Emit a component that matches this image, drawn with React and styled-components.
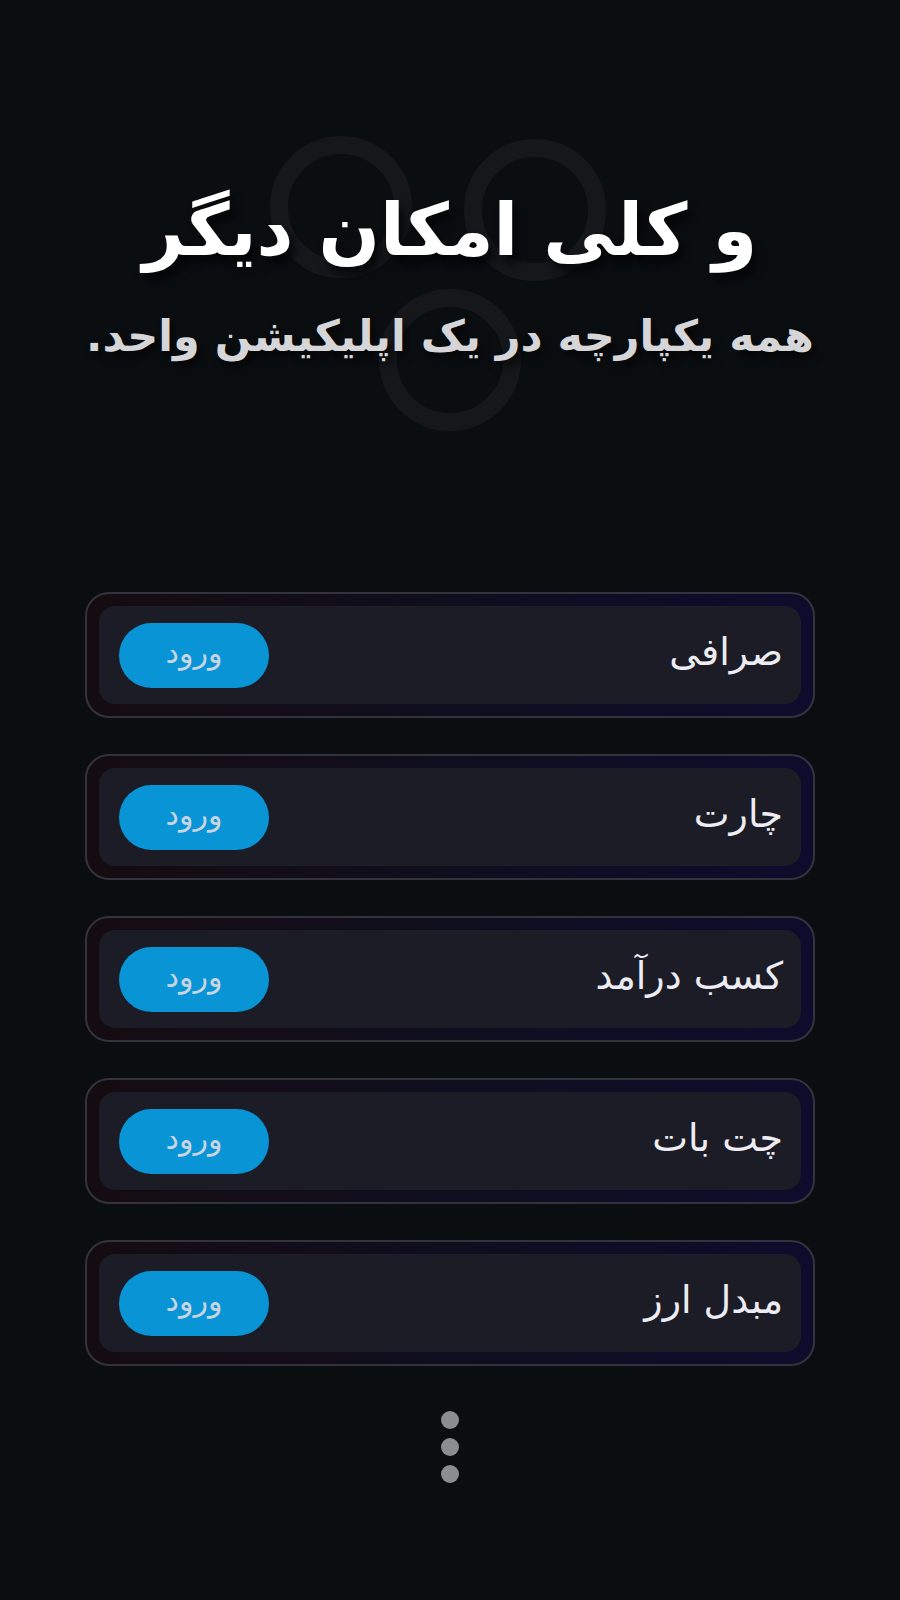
import React from "react"
import styled, { createGlobalStyle } from "styled-components"

const GlobalStyle = createGlobalStyle`
  html, body {
    margin: 0;
    padding: 0;
    background: #0b0e11;
  }
  body {
    font-family: "DejaVu Sans", "Noto Sans", sans-serif;
    color: #fff;
  }
`

const Page = styled.div`
  width: 900px;
  min-height: 1600px;
  background: #0b0e11;
  display: flex;
  flex-direction: column;
  align-items: center;
  direction: rtl;
`

const Hero = styled.header`
  position: relative;
  width: 100%;
  height: 592px;
  display: flex;
  flex-direction: column;
  align-items: center;
  padding-top: 180px;
  box-sizing: border-box;
`

const Rings = styled.svg`
  position: absolute;
  left: 0;
  top: 0;
  pointer-events: none;
`

const Title = styled.h1`
  position: relative;
  margin: 0;
  font-size: 72px;
  font-weight: 700;
  line-height: 100px;
  color: #ffffff;
  text-shadow: 5px 8px 10px rgba(0, 0, 0, 0.75);
`

const Subtitle = styled.p`
  position: relative;
  margin: 26px 0 0;
  font-size: 43px;
  font-weight: 700;
  line-height: 60px;
  color: #d6d6d8;
  text-shadow: 4px 6px 8px rgba(0, 0, 0, 0.7);
`

const List = styled.ul`
  list-style: none;
  margin: 0;
  padding: 0;
  width: 730px;
  display: flex;
  flex-direction: column;
  gap: 36px;
`

const Card = styled.li`
  box-sizing: border-box;
  height: 126px;
  padding: 12px;
  border-radius: 24px;
  border: 2px solid #34323d;
  background: linear-gradient(90deg, #150c11 0%, #0f0e1e 50%, #0d0c2c 100%);
  display: flex;
`

const Panel = styled.div`
  flex: 1;
  border-radius: 16px;
  background: #1b1c26;
  display: flex;
  align-items: center;
  justify-content: space-between;
  padding: 0 18px 0 20px;
`

const Label = styled.span`
  font-size: 38px;
  color: #ececf2;
  line-height: 1;
  padding-bottom: 6px;
`

const EnterButton = styled.button`
  width: 150px;
  height: 65px;
  border: none;
  border-radius: 33px;
  background: #0994d6;
  color: #c9d5e2;
  font-family: "DejaVu Sans", sans-serif;
  font-size: 30px;
  padding-bottom: 6px;
  cursor: pointer;
`

const Dots = styled.div`
  margin-top: 45px;
  display: flex;
  flex-direction: column;
  gap: 9px;
`

const Dot = styled.span`
  width: 18px;
  height: 18px;
  border-radius: 50%;
  background: #8b8d91;
`

const items = ["صرافی", "چارت", "کسب درآمد", "چت بات", "مبدل ارز"]

export default function App() {
  return (
    <>
      <GlobalStyle />
      <Page>
        <Hero>
          <Rings width="900" height="592" viewBox="0 0 900 592">
            <g fill="none" stroke="#15171a" strokeWidth="18">
              <circle cx="341" cy="207" r="62" />
              <circle cx="535" cy="210" r="62" />
              <circle cx="450" cy="360" r="62" />
            </g>
          </Rings>
          <Title>و کلی امکان دیگر</Title>
          <Subtitle>همه یکپارچه در یک اپلیکیشن واحد.</Subtitle>
        </Hero>
        <List>
          {items.map((name) => (
            <Card key={name}>
              <Panel>
                <Label>{name}</Label>
                <EnterButton>ورود</EnterButton>
              </Panel>
            </Card>
          ))}
        </List>
        <Dots>
          <Dot />
          <Dot />
          <Dot />
        </Dots>
      </Page>
    </>
  )
}
